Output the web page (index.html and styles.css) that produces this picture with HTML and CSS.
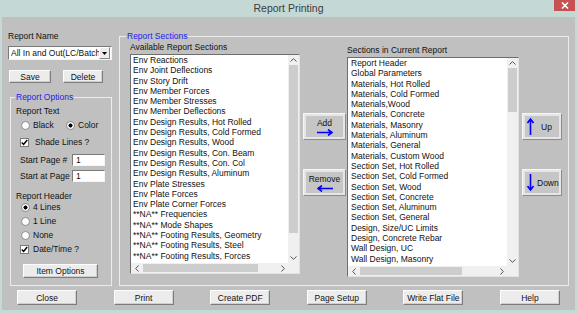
FILE: index.html
```html
<!DOCTYPE html>
<html lang="en">
<head>
    <meta charset="UTF-8">
    <meta name="viewport" content="width=device-width, initial-scale=1.0">
    <title>Report Printing</title>
    <link rel="stylesheet" href="styles.css">
</head>
<body>
<div class="window">
    <div class="titlebar">
        <span class="title">Report Printing</span>
        <span class="close-btn">
            <svg width="8" height="7" viewBox="0 0 8 7"><path d="M1 0.5L7 6.5M7 0.5L1 6.5" stroke="#fff" stroke-width="1.6"/></svg>
        </span>
    </div>

    <div class="client">
        <div class="main">
            <div class="left-col">
                <div class="label">Report Name</div>
                <div class="dropdown">
                    <span class="dropdown-text">All In and Out(LC/Batch</span>
                    <span class="dropdown-arrow">
                        <svg width="5" height="3" viewBox="0 0 5 3"><path d="M0 0H5L2.5 3Z" fill="#000"/></svg>
                    </span>
                </div>
                <div class="btn-row">
                    <button class="btn btn-save">Save</button>
                    <button class="btn btn-delete">Delete</button>
                </div>

                <fieldset class="group group-options">
                    <legend>Report Options</legend>
                    <div class="opt-head">Report Text</div>
                    <div class="radio-row row-text">
                        <span class="radio"></span><span class="opt-label label-black">Black</span>
                        <span class="radio checked"></span><span class="opt-label">Color</span>
                    </div>
                    <div class="check-row row-shade">
                        <span class="checkbox checked"><svg width="7" height="7" viewBox="0 0 7 7"><path d="M0.8 3.5L2.6 5.4L6.2 1" fill="none" stroke="#000" stroke-width="1.5"/></svg></span>
                        <span class="opt-label label-shade">Shade Lines ?</span>
                    </div>
                    <div class="field-row row-page">
                        <span class="field-label">Start Page #</span>
                        <span class="text-input">1</span>
                    </div>
                    <div class="field-row row-at">
                        <span class="field-label">Start at Page</span>
                        <span class="text-input">1</span>
                    </div>
                    <div class="opt-head head-header">Report Header</div>
                    <div class="radio-row row-4">
                        <span class="radio checked"></span><span class="opt-label">4 Lines</span>
                    </div>
                    <div class="radio-row row-gap">
                        <span class="radio"></span><span class="opt-label">1 Line</span>
                    </div>
                    <div class="radio-row row-gap">
                        <span class="radio"></span><span class="opt-label">None</span>
                    </div>
                    <div class="check-row row-gap">
                        <span class="checkbox checked"><svg width="7" height="7" viewBox="0 0 7 7"><path d="M0.8 3.5L2.6 5.4L6.2 1" fill="none" stroke="#000" stroke-width="1.5"/></svg></span>
                        <span class="opt-label">Date/Time ?</span>
                    </div>
                    <button class="btn btn-items">Item Options</button>
                </fieldset>
            </div>

            <fieldset class="group group-sections">
                <legend>Report Sections</legend>

                <div class="list-block list-available">
                    <div class="label">Available Report Sections</div>
                    <div class="listbox">
                        <div class="items">
                            <div>Env Reactions</div>
                            <div>Env Joint Deflections</div>
                            <div>Env Story Drift</div>
                            <div>Env Member Forces</div>
                            <div>Env Member Stresses</div>
                            <div>Env Member Deflections</div>
                            <div>Env Design Results, Hot Rolled</div>
                            <div>Env Design Results, Cold Formed</div>
                            <div>Env Design Results, Wood</div>
                            <div>Env Design Results, Con. Beam</div>
                            <div>Env Design Results, Con. Col</div>
                            <div>Env Design Results, Aluminum</div>
                            <div>Env Plate Stresses</div>
                            <div>Env Plate Forces</div>
                            <div>Env Plate Corner Forces</div>
                            <div>**NA** Frequencies</div>
                            <div>**NA** Mode Shapes</div>
                            <div>**NA** Footing Results, Geometry</div>
                            <div>**NA** Footing Results, Steel</div>
                            <div>**NA** Footing Results, Forces</div>
                        </div>
                        <div class="vscroll">
                            <span class="sb-arrow"><svg width="7" height="4" viewBox="0 0 7 4"><path d="M0.5 3.5L3.5 0.7L6.5 3.5" fill="none" stroke="#555"/></svg></span>
                            <div class="vtrack"><div class="vthumb thumb-available"></div></div>
                            <span class="sb-arrow"><svg width="7" height="4" viewBox="0 0 7 4"><path d="M0.5 0.5L3.5 3.3L6.5 0.5" fill="none" stroke="#555"/></svg></span>
                        </div>
                        <div class="hscroll">
                            <span class="sb-arrow"><svg width="4" height="7" viewBox="0 0 4 7"><path d="M3.5 0.5L0.7 3.5L3.5 6.5" fill="none" stroke="#555"/></svg></span>
                            <div class="htrack"><div class="hthumb hthumb-available"></div></div>
                            <span class="sb-arrow"><svg width="4" height="7" viewBox="0 0 4 7"><path d="M0.5 0.5L3.3 3.5L0.5 6.5" fill="none" stroke="#555"/></svg></span>
                        </div>
                        <div class="corner"></div>
                    </div>
                </div>

                <div class="move-col">
                    <button class="move-btn btn-add">
                        <span>Add</span>
                        <svg width="16" height="7" viewBox="0 0 16 7"><path d="M0 3.5H14.5M11 0.5L15 3.5L11 6.5" fill="none" stroke="#0000ff" stroke-width="1.6"/></svg>
                    </button>
                    <button class="move-btn btn-remove">
                        <span>Remove</span>
                        <svg width="16" height="7" viewBox="0 0 16 7"><path d="M16 3.5H1.5M5 0.5L1 3.5L5 6.5" fill="none" stroke="#0000ff" stroke-width="1.6"/></svg>
                    </button>
                </div>

                <div class="list-block list-current">
                    <div class="label">Sections in Current Report</div>
                    <div class="listbox">
                        <div class="items">
                            <div>Report Header</div>
                            <div>Global Parameters</div>
                            <div>Materials, Hot Rolled</div>
                            <div>Materials, Cold Formed</div>
                            <div>Materials,Wood</div>
                            <div>Materials, Concrete</div>
                            <div>Materials, Masonry</div>
                            <div>Materials, Aluminum</div>
                            <div>Materials, General</div>
                            <div>Materials, Custom Wood</div>
                            <div>Section Set, Hot Rolled</div>
                            <div>Section Set, Cold Formed</div>
                            <div>Section Set, Wood</div>
                            <div>Section Set, Concrete</div>
                            <div>Section Set, Aluminum</div>
                            <div>Section Set, General</div>
                            <div>Design, Size/UC Limits</div>
                            <div>Design, Concrete Rebar</div>
                            <div>Wall Design, UC</div>
                            <div>Wall Design, Masonry</div>
                        </div>
                        <div class="vscroll">
                            <span class="sb-arrow"><svg width="7" height="4" viewBox="0 0 7 4"><path d="M0.5 3.5L3.5 0.7L6.5 3.5" fill="none" stroke="#555"/></svg></span>
                            <div class="vtrack"><div class="vthumb thumb-current"></div></div>
                            <span class="sb-arrow"><svg width="7" height="4" viewBox="0 0 7 4"><path d="M0.5 0.5L3.5 3.3L6.5 0.5" fill="none" stroke="#555"/></svg></span>
                        </div>
                        <div class="hscroll">
                            <span class="sb-arrow"><svg width="4" height="7" viewBox="0 0 4 7"><path d="M3.5 0.5L0.7 3.5L3.5 6.5" fill="none" stroke="#555"/></svg></span>
                            <div class="htrack"><div class="hthumb hthumb-current"></div></div>
                            <span class="sb-arrow"><svg width="4" height="7" viewBox="0 0 4 7"><path d="M0.5 0.5L3.3 3.5L0.5 6.5" fill="none" stroke="#555"/></svg></span>
                        </div>
                        <div class="corner"></div>
                    </div>
                </div>

                <div class="order-col">
                    <button class="move-btn order-btn btn-up">
                        <svg width="7" height="17" viewBox="0 0 7 17"><path d="M3.5 17V1.5M0.5 5L3.5 1L6.5 5" fill="none" stroke="#0000ff" stroke-width="1.6"/></svg>
                        <span>Up</span>
                    </button>
                    <button class="move-btn order-btn btn-down">
                        <svg width="7" height="17" viewBox="0 0 7 17"><path d="M3.5 0V15.5M0.5 12L3.5 16L6.5 12" fill="none" stroke="#0000ff" stroke-width="1.6"/></svg>
                        <span>Down</span>
                    </button>
                </div>
            </fieldset>
        </div>

        <div class="footer">
            <button class="btn btn-foot">Close</button>
            <button class="btn btn-foot">Print</button>
            <button class="btn btn-foot">Create PDF</button>
            <button class="btn btn-foot">Page Setup</button>
            <button class="btn btn-foot">Write Flat File</button>
            <button class="btn btn-foot">Help</button>
        </div>
    </div>
</div>
</body>
</html>
```

FILE: styles.css
```css
body {
    margin: 0;
    font-family: 'Liberation Sans', Arial, sans-serif;
    font-size: 8.5px;
    color: #111;
}

.window {
    width: 577px;
    height: 313px;
    background: #c4d9d6;
    display: flex;
    flex-direction: column;
}

.titlebar {
    height: 17px;
    display: grid;
    grid-template-columns: 1fr auto 1fr;
    align-items: start;
}

.title {
    grid-column: 2;
    font-size: 10.5px;
    line-height: 16px;
    color: #3c3c3c;
}

.close-btn {
    grid-column: 3;
    justify-self: end;
    width: 21px;
    height: 11px;
    margin-right: 2px;
    background: #c75050;
    display: flex;
    align-items: center;
    justify-content: center;
}

.client {
    margin: 0 2px 3px 2px;
    height: 293px;
    box-sizing: border-box;
    background: #c0c0c0;
    padding: 14px 0 0 6px;
}

.main {
    display: flex;
    align-items: flex-start;
    height: 255px;
}

.label {
    line-height: 10px;
    white-space: nowrap;
}

/* left column */

.left-col {
    width: 104px;
    display: flex;
    flex-direction: column;
}

.dropdown {
    margin-top: 5px;
    height: 14px;
    box-sizing: border-box;
    background: #fff;
    border: 1px solid;
    border-color: #7a7a7a #f4f4f4 #f4f4f4 #7a7a7a;
    display: flex;
    align-items: center;
}

.dropdown-text {
    flex: 1;
    padding-left: 2px;
    overflow: hidden;
    white-space: nowrap;
    line-height: 12px;
}

.dropdown-arrow {
    width: 9px;
    height: 10px;
    margin-right: 1px;
    background: #ececec;
    border: 1px solid;
    border-color: #fff #888 #888 #fff;
    display: flex;
    align-items: center;
    justify-content: center;
}

.btn-row {
    margin-top: 10px;
    display: flex;
}

.btn {
    font-family: inherit;
    font-size: 8.5px;
    color: #111;
    padding: 0;
    background: #ececec;
    border: 1px solid;
    border-color: #fdfdfd #7c7c7c #7c7c7c #fdfdfd;
    box-shadow: inset -1px -1px 0 #cfcfcf;
    line-height: 10px;
}

.btn-save {
    margin-left: 1px;
    width: 42px;
    height: 13px;
}

.btn-delete {
    margin-left: 12px;
    width: 40px;
    height: 13px;
}

/* group boxes */

.group {
    box-sizing: border-box;
    margin: 0;
    min-width: 0;
    border: 1px solid #ececec;
}

.group legend {
    color: #2222ee;
    line-height: 10px;
    padding: 0 1px;
}

.group-options {
    margin: 9px 0 0 2px;
    width: 102px;
    height: 194px;
    padding: 4px 0 0 5px;
}

.group-options legend {
    margin-left: -1px;
}

.opt-head {
    line-height: 10px;
}

.head-header {
    margin-top: 9px;
}

.radio-row,
.check-row {
    height: 10px;
    display: flex;
    align-items: center;
}

.row-text {
    margin-top: 4px;
}

.row-shade {
    margin-top: 7px;
}

.row-4 {
    margin-top: 1px;
}

.row-gap {
    margin-top: 4px;
}

.radio {
    width: 9px;
    height: 9px;
    box-sizing: border-box;
    border-radius: 50%;
    background: #fff;
    border: 1px solid #8a8a8a;
    margin-left: 5px;
    flex-shrink: 0;
}

.radio.checked {
    background: radial-gradient(circle, #000 0 1.8px, #fff 2.3px);
}

.radio-row .radio:first-child {
    margin-left: 5px;
}

.radio-row .radio + .opt-label {
    margin-left: 3px;
}

.label-black {
    width: 33px;
}

.row-text .radio.checked {
    margin-left: 0;
}

.checkbox {
    width: 9px;
    height: 9px;
    box-sizing: border-box;
    background: #fff;
    border: 1px solid #7a7a7a;
    margin-left: 4px;
    display: flex;
    align-items: center;
    justify-content: center;
    flex-shrink: 0;
}

.check-row .opt-label {
    margin-left: 4px;
}

.check-row .label-shade {
    margin-left: 6px;
}

.opt-label {
    line-height: 10px;
    white-space: nowrap;
}

.field-row {
    height: 12px;
    display: flex;
    align-items: center;
}

.row-page {
    margin-top: 7px;
}

.row-at {
    margin-top: 4px;
}

.field-label {
    width: 52px;
    margin-left: 4px;
    white-space: nowrap;
}

.text-input {
    width: 33px;
    height: 12px;
    box-sizing: border-box;
    background: #fff;
    border: 1px solid;
    border-color: #7a7a7a #f4f4f4 #f4f4f4 #7a7a7a;
    padding-left: 3px;
    line-height: 10px;
}

.btn-items {
    display: block;
    margin: 10px 0 0 7px;
    width: 75px;
    height: 14px;
}

/* report sections */

.group-sections {
    margin-left: 7px;
    width: 450px;
    height: 255px;
    padding: 1px 0 0 10px;
    display: flex;
    align-items: flex-start;
}

.group-sections legend {
    margin-left: -4px;
}

.list-available {
    width: 170px;
}

.list-current {
    width: 172px;
    margin: 3px 0 0 1px;
}

.listbox {
    margin-top: 2px;
    height: 220px;
    box-sizing: border-box;
    background: #fff;
    border: 1px solid;
    border-color: #6e6e6e #e2e2e2 #e2e2e2 #6e6e6e;
    display: grid;
    grid-template-columns: 1fr 11px;
    grid-template-rows: 1fr 10px;
}

.items {
    overflow: hidden;
    padding-left: 2px;
    white-space: nowrap;
}

.list-current .items {
    padding-left: 3px;
}

.items div {
    height: 10.3px;
    line-height: 10.3px;
}

.vscroll {
    background: #f0f0f0;
    display: flex;
    flex-direction: column;
}

.sb-arrow {
    height: 10px;
    flex: 0 0 10px;
    display: flex;
    align-items: center;
    justify-content: center;
}

.vtrack {
    flex: 1;
}

.vthumb {
    margin: 0 1px;
    background: #cdcdcd;
}

.thumb-available {
    height: 168px;
}

.thumb-current {
    height: 44px;
}

.hscroll {
    background: #f0f0f0;
    display: flex;
}

.hscroll .sb-arrow {
    width: 11px;
    height: 10px;
    flex: 0 0 11px;
}

.htrack {
    flex: 1;
    display: flex;
    align-items: center;
}

.hthumb {
    height: 8px;
    margin-left: 1px;
    background: #cdcdcd;
}

.hthumb-available {
    width: 115px;
}

.hthumb-current {
    width: 102px;
}

.corner {
    background: #f0f0f0;
}

.move-col {
    width: 43px;
    margin-left: 3px;
    display: flex;
    flex-direction: column;
}

.order-col {
    width: 40px;
    margin-left: 3px;
    display: flex;
    flex-direction: column;
}

.move-btn {
    font-family: inherit;
    font-size: 8.5px;
    color: #111;
    height: 27px;
    padding: 0;
    background: #c6c6c6;
    border: 1px solid;
    border-color: #f6f6f6 #8c8c8c #8c8c8c #f6f6f6;
    box-shadow: inset 0 0 0 2px #e6e6e6;
    display: flex;
    flex-direction: column;
    align-items: center;
    justify-content: flex-start;
    padding-top: 4px;
}

.move-btn span {
    line-height: 10px;
}

.move-btn svg {
    margin-top: 1px;
}

.btn-add,
.btn-up {
    margin-top: 71px;
}

.btn-remove,
.btn-down {
    margin-top: 29px;
}

.order-btn {
    flex-direction: row;
    align-items: center;
    padding: 0 0 0 4px;
}

.order-btn svg {
    margin-top: 0;
}

.btn-up span {
    margin-left: 7px;
}

.btn-down span {
    margin-left: 3px;
}

/* footer */

.footer {
    margin: 4px 0 0 9px;
    display: grid;
    grid-template-columns: repeat(6, 60px);
    column-gap: 36.6px;
}

.btn-foot {
    height: 15px;
}
```
